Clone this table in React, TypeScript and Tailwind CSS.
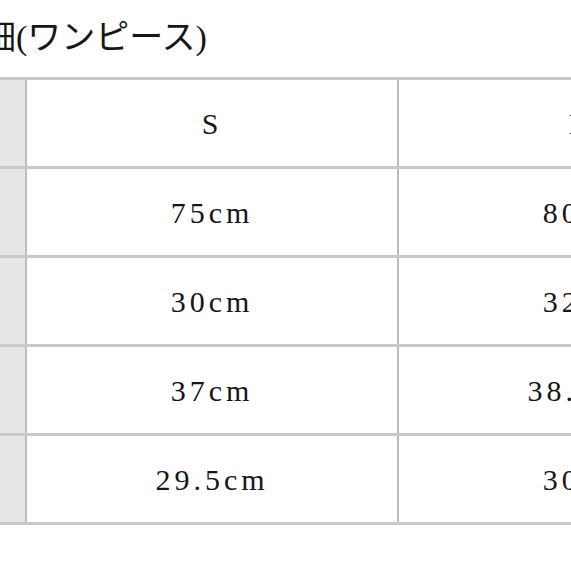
import React from 'react'

// size chart rows: [label, S, M]
const rows: [string, string, string][] = [
  ['サイズ', 'S', 'M'],
  ['着丈', '75cm', '80cm'],
  ['身幅', '30cm', '32cm'],
  ['袖丈', '37cm', '38.5cm'],
  ['肩幅', '29.5cm', '30cm'],
]

const serif = { fontFamily: '"Liberation Serif", "Noto Sans CJK JP", serif' }

export default function App() {
  return (
    <div className="w-[571px] h-[571px] overflow-hidden bg-white text-[#161616]">
      {/* Title */}
      <div className="h-[77px] flex items-center">
        <h2
          className="-ml-[52px] text-[34px] leading-none whitespace-nowrap pb-[2px]"
          style={{ fontFamily: '"Liberation Serif", "Noto Sans CJK JP", serif' }}
        >
          詳細(ワンピース)
        </h2>
      </div>

      {/* Table */}
      <div className="border-t-[3px] border-[#c9c9c9] w-[800px]">
        {rows.map((r, i) => (
          <div key={i} className="flex h-[89px] border-b-[3px] border-[#c9c9c9]">
            <div className="w-[27px] shrink-0 bg-[#e6e6e6] border-r-[2px] border-[#bdbdbd]" />
            <div
              className="w-[372px] shrink-0 flex items-center justify-center border-r-[2px] border-[#bdbdbd] text-[30px] tracking-[4px]"
              style={serif}
            >
              {r[1]}
            </div>
            <div
              className="w-[370px] shrink-0 flex items-center justify-center text-[30px] tracking-[4px]"
              style={serif}
            >
              {r[2]}
            </div>
          </div>
        ))}
      </div>
    </div>
  )
}
